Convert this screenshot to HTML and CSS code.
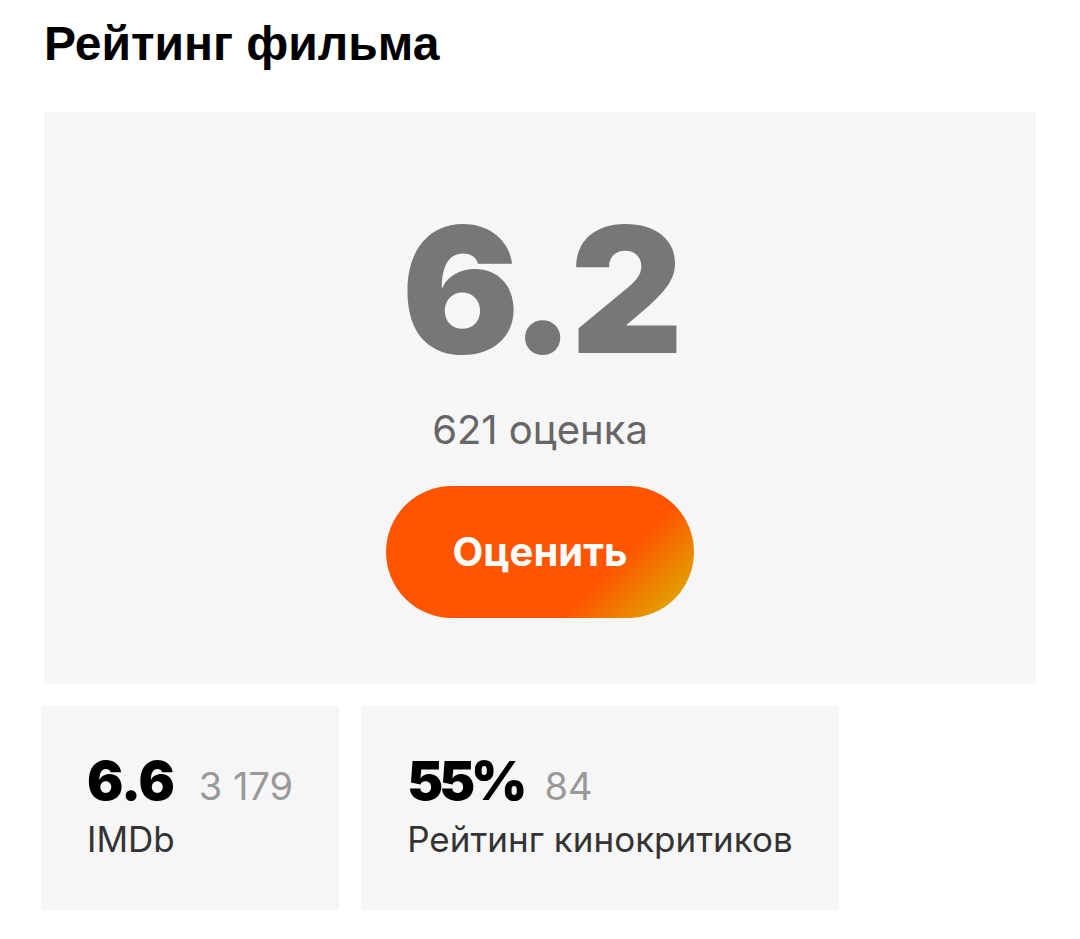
FILE: index.html
```html
<!DOCTYPE html>
<html lang="ru">
<head>
<meta charset="utf-8">
<title>Рейтинг фильма</title>
<link rel="stylesheet" href="styles.css">
</head>
<body>
<section class="rating">
  <h2 class="rating__title">Рейтинг фильма</h2>
  <div class="rating__main">
    <div class="rating__value">6.2</div>
    <div class="rating__count">621 оценка</div>
    <button class="rating__button" type="button">Оценить</button>
  </div>
  <div class="rating__extra">
    <div class="extra-card">
      <div class="extra-card__row">
        <span class="extra-card__value">6.6</span>
        <span class="extra-card__count">3 179</span>
      </div>
      <div class="extra-card__label">IMDb</div>
    </div>
    <div class="extra-card">
      <div class="extra-card__row">
        <span class="extra-card__value extra-card__value--percent">55%</span>
        <span class="extra-card__count">84</span>
      </div>
      <div class="extra-card__label">Рейтинг кинокритиков</div>
    </div>
  </div>
</section>
</body>
</html>
```

FILE: styles.css
```css
html, body {
  margin: 0;
  padding: 0;
  background: #ffffff;
}

body {
  font-family: "Inter", "Liberation Sans", sans-serif;
  color: #000;
}

.rating {
  padding: 20px 0 0 0;
}

.rating__title {
  margin: 0 0 0 44px;
  font-family: "Liberation Sans", Arial, sans-serif;
  font-weight: 700;
  font-size: 48px;
  line-height: 48px;
  height: 92px;
  color: #000;
}

.rating__main {
  margin-left: 44px;
  width: 992px;
  height: 572px;
  box-sizing: border-box;
  padding-top: 90px;
  background: #f6f6f6;
  display: flex;
  flex-direction: column;
  align-items: center;
}

.rating__value {
  font-family: "Inter", sans-serif;
  font-weight: 900;
  font-size: 175px;
  line-height: 175px;
  color: #777777;
  letter-spacing: -5px;
}

.rating__count {
  margin-top: 33px;
  font-family: "Inter", sans-serif;
  font-weight: 400;
  font-size: 40px;
  line-height: 40px;
  color: #666666;
}

.rating__button {
  margin-top: 36px;
  width: 308px;
  height: 132px;
  border: none;
  border-radius: 66px;
  background: linear-gradient(135deg, #ff5500 69.93%, #d6bb00);
  color: #ffffff;
  font-family: "Inter", sans-serif;
  font-weight: 700;
  font-size: 40px;
  line-height: 40px;
  padding: 0;
  display: flex;
  align-items: center;
  justify-content: center;
}

.rating__extra {
  margin: 22px 0 0 41px;
  display: flex;
  gap: 22px;
}

.extra-card {
  background: #f6f6f6;
  padding: 48px 46px 53px 46px;
  display: flex;
  flex-direction: column;
}

.extra-card__row {
  display: flex;
  align-items: baseline;
}

.extra-card__value {
  font-family: "Inter", sans-serif;
  font-weight: 900;
  font-size: 54px;
  line-height: 54px;
  color: #000;
  letter-spacing: -1px;
}

.extra-card__value--percent {
  letter-spacing: -4px;
}

.extra-card__count {
  margin-left: 25px;
  font-family: "Inter", sans-serif;
  font-weight: 400;
  font-size: 38px;
  line-height: 38px;
  color: #999999;
}

.extra-card__value--percent + .extra-card__count {
  margin-left: 21px;
}

.extra-card__label {
  margin-top: 14px;
  font-family: "Inter", sans-serif;
  font-weight: 400;
  font-size: 35px;
  line-height: 35px;
  color: #333333;
}
```
